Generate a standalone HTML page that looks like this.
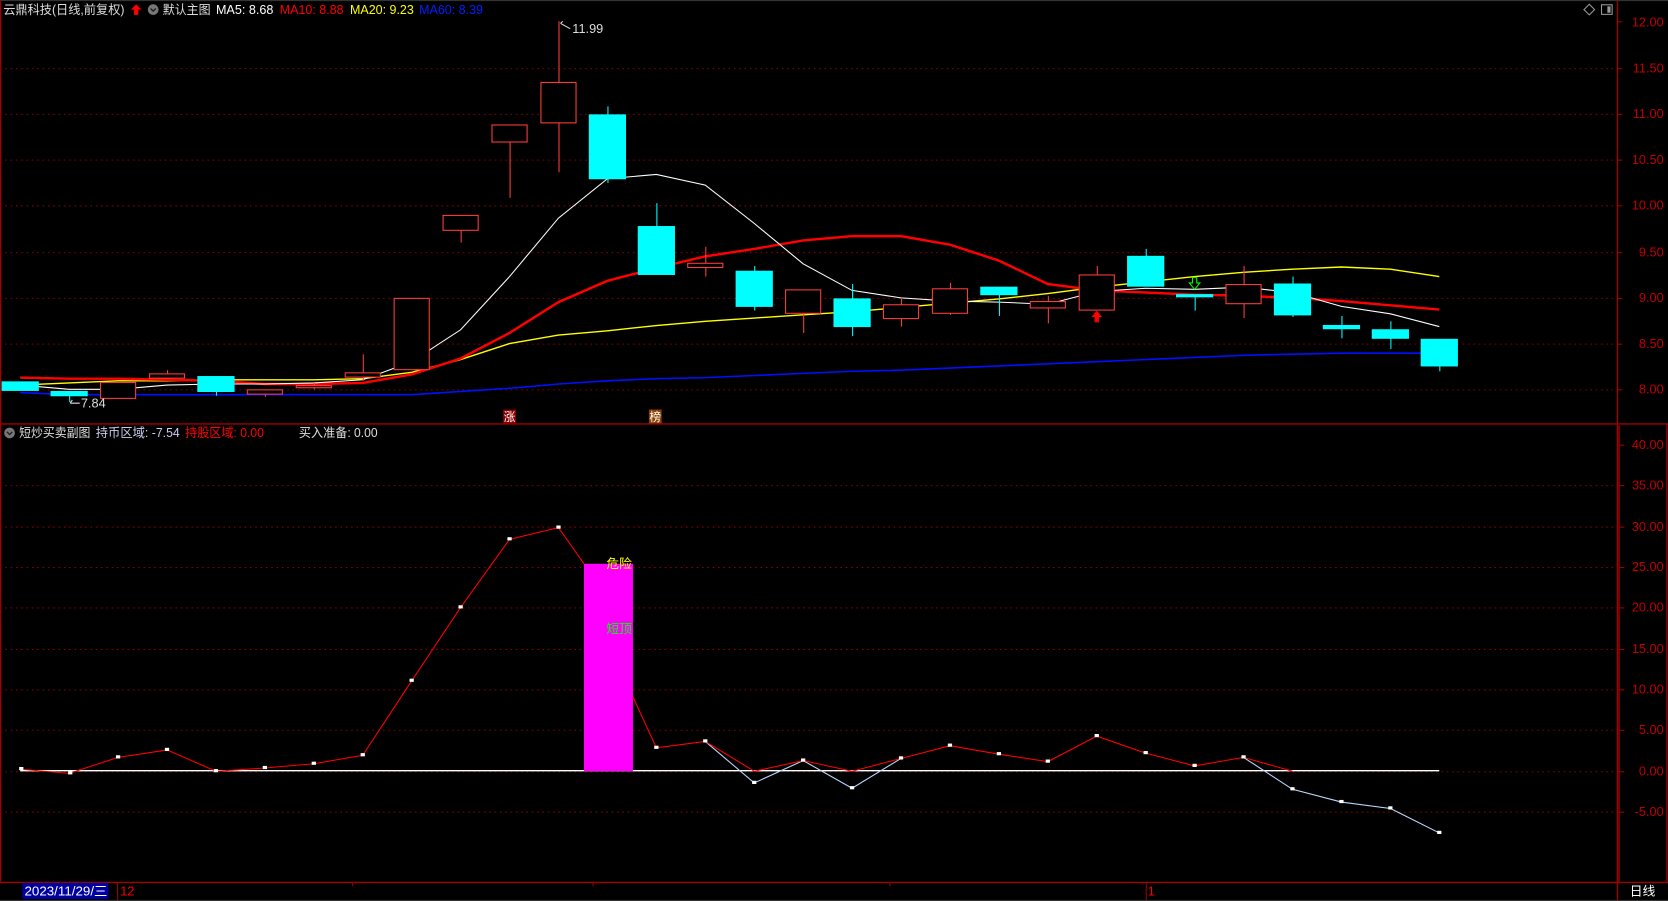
<!DOCTYPE html>
<html><head><meta charset="utf-8"><style>
html,body{margin:0;padding:0;background:#000;width:1668px;height:901px;overflow:hidden}
svg{display:block}
text{font-family:"Liberation Sans","Noto Sans CJK SC",sans-serif}
</style></head><body>
<svg width="1668" height="901" viewBox="0 0 1568 847" preserveAspectRatio="none">
<rect width="1568" height="847" fill="#000"/>
<g stroke="#8b0000" stroke-width="1" stroke-dasharray="1.5,3.5">
<line x1="0" y1="64.5" x2="1520" y2="64.5"/><line x1="0" y1="107.5" x2="1520" y2="107.5"/>
<line x1="0" y1="150.5" x2="1520" y2="150.5"/><line x1="0" y1="193.5" x2="1520" y2="193.5"/>
<line x1="0" y1="237.5" x2="1520" y2="237.5"/><line x1="0" y1="280.5" x2="1520" y2="280.5"/>
<line x1="0" y1="323.5" x2="1520" y2="323.5"/><line x1="0" y1="366.5" x2="1520" y2="366.5"/>
<line x1="0" y1="456.5" x2="1520" y2="456.5"/><line x1="0" y1="495.5" x2="1520" y2="495.5"/>
<line x1="0" y1="533.5" x2="1520" y2="533.5"/><line x1="0" y1="571.5" x2="1520" y2="571.5"/>
<line x1="0" y1="610.5" x2="1520" y2="610.5"/><line x1="0" y1="648.5" x2="1520" y2="648.5"/>
<line x1="0" y1="686.5" x2="1520" y2="686.5"/><line x1="0" y1="725.5" x2="1520" y2="725.5"/>
<line x1="0" y1="763.5" x2="1520" y2="763.5"/>
</g>
<g stroke="#a00000" stroke-width="1.3" fill="none">
<line x1="1520.5" y1="0" x2="1520.5" y2="847"/>
<line x1="0" y1="398.5" x2="1568" y2="398.5"/>
<line x1="0" y1="829.5" x2="1568" y2="829.5"/>
<line x1="1567" y1="398" x2="1567" y2="829"/>
<line x1="1522" y1="400" x2="1522" y2="829"/>
<line x1="0.5" y1="0" x2="0.5" y2="829"/>
</g>
<line x1="0" y1="0.5" x2="1568" y2="0.5" stroke="#333"/>
<g stroke="#a00000">
<line x1="1520" y1="20.5" x2="1525" y2="20.5"/><line x1="1520" y1="64.5" x2="1525" y2="64.5"/><line x1="1520" y1="107.5" x2="1525" y2="107.5"/><line x1="1520" y1="150.5" x2="1525" y2="150.5"/><line x1="1520" y1="193.5" x2="1525" y2="193.5"/><line x1="1520" y1="237.5" x2="1525" y2="237.5"/><line x1="1520" y1="280.5" x2="1525" y2="280.5"/><line x1="1520" y1="323.5" x2="1525" y2="323.5"/><line x1="1520" y1="366.5" x2="1525" y2="366.5"/>
<line x1="1522" y1="418.5" x2="1527" y2="418.5"/><line x1="1522" y1="456.5" x2="1527" y2="456.5"/><line x1="1522" y1="495.5" x2="1527" y2="495.5"/><line x1="1522" y1="533.5" x2="1527" y2="533.5"/><line x1="1522" y1="571.5" x2="1527" y2="571.5"/><line x1="1522" y1="610.5" x2="1527" y2="610.5"/><line x1="1522" y1="648.5" x2="1527" y2="648.5"/><line x1="1522" y1="686.5" x2="1527" y2="686.5"/><line x1="1522" y1="725.5" x2="1527" y2="725.5"/><line x1="1522" y1="763.5" x2="1527" y2="763.5"/>
</g>
<g fill="#c00000" font-size="12" text-anchor="end">
<text x="1564" y="25">12.00</text><text x="1564" y="68">11.50</text><text x="1564" y="111">11.00</text><text x="1564" y="154">10.50</text><text x="1564" y="197">10.00</text><text x="1564" y="241">9.50</text><text x="1564" y="284">9.00</text><text x="1564" y="327">8.50</text><text x="1564" y="370">8.00</text>
<text x="1564" y="422">40.00</text><text x="1564" y="460">35.00</text><text x="1564" y="499">30.00</text><text x="1564" y="537">25.00</text><text x="1564" y="575">20.00</text><text x="1564" y="614">15.00</text><text x="1564" y="652">10.00</text><text x="1564" y="690">5.00</text><text x="1564" y="729">0.00</text><text x="1564" y="767">-5.00</text>
</g>
<path d="M1494 4 L1499 9 L1494 14 L1489 9 Z" fill="none" stroke="#999"/>
<rect x="1505.5" y="4.5" width="10" height="9" fill="none" stroke="#999"/>
<rect x="1511" y="6" width="3" height="6" fill="#999"/>
<g font-size="12">
<text x="3" y="13" fill="#ddd" textLength="114" lengthAdjust="spacingAndGlyphs">云鼎科技(日线,前复权)</text>
<path d="M128 4 L133 9 L130 9 L130 14 L126 14 L126 9 L123 9 Z" fill="#f00"/>
<circle cx="144" cy="9" r="5" fill="#777"/><path d="M141.5 8 L144 10.5 L146.5 8" stroke="#222" stroke-width="1.3" fill="none"/>
<text x="153" y="13" fill="#ddd" textLength="45" lengthAdjust="spacingAndGlyphs">默认主图</text>
<text x="203" y="13" fill="#fff" textLength="54" lengthAdjust="spacingAndGlyphs">MA5: 8.68</text>
<text x="263" y="13" fill="#f00" textLength="60" lengthAdjust="spacingAndGlyphs">MA10: 8.88</text>
<text x="329" y="13" fill="#ff0" textLength="60" lengthAdjust="spacingAndGlyphs">MA20: 9.23</text>
<text x="394" y="13" fill="#0020ff" textLength="60" lengthAdjust="spacingAndGlyphs">MA60: 8.39</text>
</g>
<polyline fill="none" stroke="#0010ff" stroke-width="1.5" points="19,369 65,371 111,371 157,371 203,371 249,371 295,371 341,371 387,371 433,368 479,365 525,361 571,358 617,356 663,355 709,353 755,351 801,349 847,348 893,346 939,344 985,342 1031,340 1077,338 1123,336 1169,334 1215,333 1261,332 1307,332 1353,332"/>
<polyline fill="none" stroke="#ffff00" stroke-width="1.3" points="19,362 65,360 111,358 157,358 203,357 249,357 295,357 341,356 387,350 433,338 479,323 525,315 571,311 617,306 663,302 709,299 755,296 801,293 847,289 893,285 939,281 985,276 1031,270 1077,265 1123,260 1169,256 1215,253 1261,251 1307,253 1353,260"/>
<polyline fill="none" stroke="#ff0000" stroke-width="2.3" points="19,355 65,356 111,356 157,357 203,358 249,361 295,361 341,360 387,352 433,337 479,313 525,284 571,264 617,252 663,241 709,234 755,226 801,222 847,222 893,230 939,245 985,267 1031,273 1077,275 1123,277 1169,278 1215,280 1261,283 1307,287 1353,291"/>
<polyline fill="none" stroke="#fff" stroke-width="1" points="19,362 65,366 111,366 157,362 203,361 249,361 295,360 341,357 387,340 433,310 479,260 525,205 571,168 617,164 663,174 709,210 755,248 801,273 847,280 893,283 939,284 985,286 1031,274 1077,271 1123,272 1169,270 1215,275 1261,288 1307,295 1353,307"/>
<g stroke-width="1">
<g stroke="#00ffff" fill="#00ffff">
<rect x="2" y="359" width="34" height="8"/>
<line x1="65.5" y1="368" x2="65.5" y2="378"/><rect x="48" y="368" width="34" height="4"/>
<line x1="203.5" y1="354" x2="203.5" y2="372"/><rect x="186" y="354" width="34" height="14"/>
<line x1="571.5" y1="100" x2="571.5" y2="172"/><rect x="554" y="108" width="34" height="60"/>
<line x1="617.5" y1="191" x2="617.5" y2="258"/><rect x="600" y="213" width="34" height="45"/>
<line x1="709.5" y1="250" x2="709.5" y2="292"/><rect x="692" y="255" width="34" height="33"/>
<line x1="801.5" y1="267" x2="801.5" y2="316"/><rect x="784" y="281" width="34" height="26"/>
<line x1="939.5" y1="270" x2="939.5" y2="297"/><rect x="922" y="270" width="34" height="7"/>
<line x1="1077.5" y1="234" x2="1077.5" y2="269"/><rect x="1060" y="241" width="34" height="28"/>
<line x1="1123.5" y1="277" x2="1123.5" y2="292"/><rect x="1106" y="277" width="34" height="2"/>
<line x1="1215.5" y1="260" x2="1215.5" y2="298"/><rect x="1198" y="267" width="34" height="29"/>
<line x1="1261.5" y1="297" x2="1261.5" y2="318"/><rect x="1244" y="306" width="34" height="3"/>
<line x1="1307.5" y1="302" x2="1307.5" y2="328"/><rect x="1290" y="310" width="34" height="8"/>
<line x1="1353.5" y1="319" x2="1353.5" y2="349"/><rect x="1336" y="319" width="34" height="25"/>
</g>
<g stroke="#ff3c3c" fill="#000">
<rect x="94.5" y="359.5" width="33" height="15"/>
<line x1="157.5" y1="348" x2="157.5" y2="351"/><rect x="140.5" y="351.5" width="33" height="4"/>
<line x1="249.5" y1="370" x2="249.5" y2="373"/><rect x="232.5" y="366.5" width="33" height="4"/>
<line x1="295.5" y1="360" x2="295.5" y2="366"/><rect x="278.5" y="362.5" width="33" height="2"/>
<line x1="341.5" y1="333" x2="341.5" y2="358"/><rect x="324.5" y="350.5" width="33" height="4"/>
<rect x="370.5" y="280.5" width="33" height="67"/>
<line x1="433.5" y1="216" x2="433.5" y2="228"/><rect x="416.5" y="202.5" width="33" height="14"/>
<line x1="479.5" y1="133" x2="479.5" y2="186"/><rect x="462.5" y="117.5" width="33" height="16"/>
<line x1="525.5" y1="20" x2="525.5" y2="162"/><rect x="508.5" y="77.5" width="33" height="38"/>
<line x1="663.5" y1="232" x2="663.5" y2="260"/><rect x="646.5" y="247.5" width="33" height="4"/>
<line x1="755.5" y1="294" x2="755.5" y2="313"/><rect x="738.5" y="272.5" width="33" height="22"/>
<line x1="847.5" y1="281" x2="847.5" y2="307"/><rect x="830.5" y="286.5" width="33" height="13"/>
<line x1="893.5" y1="266" x2="893.5" y2="296"/><rect x="876.5" y="271.5" width="33" height="23"/>
<line x1="985.5" y1="278" x2="985.5" y2="304"/><rect x="968.5" y="283.5" width="33" height="6"/>
<line x1="1031.5" y1="250" x2="1031.5" y2="258"/><rect x="1014.5" y="258.5" width="33" height="33"/>
<line x1="1169.5" y1="250" x2="1169.5" y2="299"/><rect x="1152.5" y="267.5" width="33" height="18"/>
</g>
</g>
<path d="M1031 292 L1036 298 L1033 298 L1033 303 L1029 303 L1029 298 L1026 298 Z" fill="#f00"/>
<path d="M1121 261 L1125 261 L1125 266 L1128 266 L1123 272 L1118 266 L1121 266 Z" fill="none" stroke="#0f0"/>
<text x="538" y="31" fill="#ddd" font-size="12">11.99</text>
<path d="M536 27 L527 22 M527 22 L529 20" stroke="#ddd" fill="none"/>
<text x="76" y="383" fill="#ddd" font-size="12">7.84</text>
<path d="M66 379 L75 379 M66 379 L68 376" stroke="#ddd" fill="none"/>
<rect x="473" y="385" width="12" height="13" fill="#8b0000"/>
<text x="479" y="396" fill="#fff" font-size="11" text-anchor="middle">涨</text>
<rect x="610" y="385" width="12" height="13" fill="#8b4000"/>
<text x="616" y="396" fill="#fff" font-size="11" text-anchor="middle">榜</text>
<g font-size="12">
<circle cx="9" cy="407" r="5" fill="#777"/><path d="M6.5 406 L9 408.5 L11.5 406" stroke="#222" stroke-width="1.3" fill="none"/>
<text x="18" y="411" fill="#ddd" textLength="67" lengthAdjust="spacingAndGlyphs">短炒买卖副图</text>
<text x="90" y="411" fill="#cce" textLength="79" lengthAdjust="spacingAndGlyphs">持币区域: -7.54</text>
<text x="174" y="411" fill="#f00" textLength="74" lengthAdjust="spacingAndGlyphs">持股区域: 0.00</text>
<text x="281" y="411" fill="#ddd" textLength="74" lengthAdjust="spacingAndGlyphs">买入准备: 0.00</text>
</g>
<line x1="19" y1="724.5" x2="1353" y2="724.5" stroke="#fff" stroke-width="1.2"/>
<rect x="549" y="530" width="46" height="195" fill="#ff00ff"/>
<text x="594" y="534" fill="#ff0" font-size="12" text-anchor="end">危险</text>
<text x="594" y="595" fill="#0f0" font-size="12" text-anchor="end">短顶</text>
<polyline fill="none" stroke="#bcd8ff" stroke-width="1" points="663,697 709,736 755,715 801,741 847,713"/>
<polyline fill="none" stroke="#bcd8ff" stroke-width="1" points="1169,712 1215,742 1261,754 1307,760 1353,783"/>
<polyline fill="none" stroke="#f00" stroke-width="1" points="19,723 65,727 111,712 157,705 203,725 249,722 295,718 341,710 387,640 433,571 479,507 525,496 549,530"/>
<polyline fill="none" stroke="#f00" stroke-width="1" points="595,655 617,703 663,697 709,725 755,715 801,725 847,713 893,701 939,709 985,716 1031,692 1077,708 1123,720 1169,712 1215,725"/>
<g fill="#fff">
<rect x="18" y="721" width="4" height="3"/><rect x="64" y="725" width="4" height="3"/><rect x="109" y="710" width="4" height="3"/><rect x="155" y="703" width="4" height="3"/><rect x="201" y="723" width="4" height="3"/><rect x="247" y="720" width="4" height="3"/><rect x="293" y="716" width="4" height="3"/><rect x="339" y="708" width="4" height="3"/><rect x="385" y="638" width="4" height="3"/><rect x="431" y="569" width="4" height="3"/><rect x="477" y="505" width="4" height="3"/><rect x="523" y="494" width="4" height="3"/>
<rect x="615" y="701" width="4" height="3"/><rect x="661" y="695" width="4" height="3"/><rect x="707" y="734" width="4" height="3"/><rect x="753" y="713" width="4" height="3"/><rect x="799" y="739" width="4" height="3"/><rect x="845" y="711" width="4" height="3"/><rect x="891" y="699" width="4" height="3"/><rect x="937" y="707" width="4" height="3"/><rect x="983" y="714" width="4" height="3"/><rect x="1029" y="690" width="4" height="3"/><rect x="1075" y="706" width="4" height="3"/><rect x="1121" y="718" width="4" height="3"/><rect x="1167" y="710" width="4" height="3"/><rect x="1213" y="740" width="4" height="3"/><rect x="1259" y="752" width="4" height="3"/><rect x="1305" y="758" width="4" height="3"/><rect x="1351" y="781" width="4" height="3"/>
</g>
<g stroke="#a00000"><line x1="331.5" y1="830" x2="331.5" y2="833"/><line x1="557.5" y1="830" x2="557.5" y2="833"/><line x1="836.5" y1="830" x2="836.5" y2="833"/><line x1="1077.5" y1="830" x2="1077.5" y2="846"/><line x1="110.5" y1="830" x2="110.5" y2="846"/></g>
<rect x="21" y="830" width="81" height="15" fill="#0000a0"/>
<text x="23" y="842" fill="#fff" font-size="12" textLength="78" lengthAdjust="spacingAndGlyphs">2023/11/29/三</text>
<text x="113" y="842" fill="#f00" font-size="12">12</text>
<text x="1079" y="842" fill="#f00" font-size="12">1</text>
<text x="1532" y="842" fill="#fff" font-size="12" textLength="24" lengthAdjust="spacingAndGlyphs">日线</text>
<line x1="0" y1="846.5" x2="1568" y2="846.5" stroke="#333"/>
</svg>
</body></html>
